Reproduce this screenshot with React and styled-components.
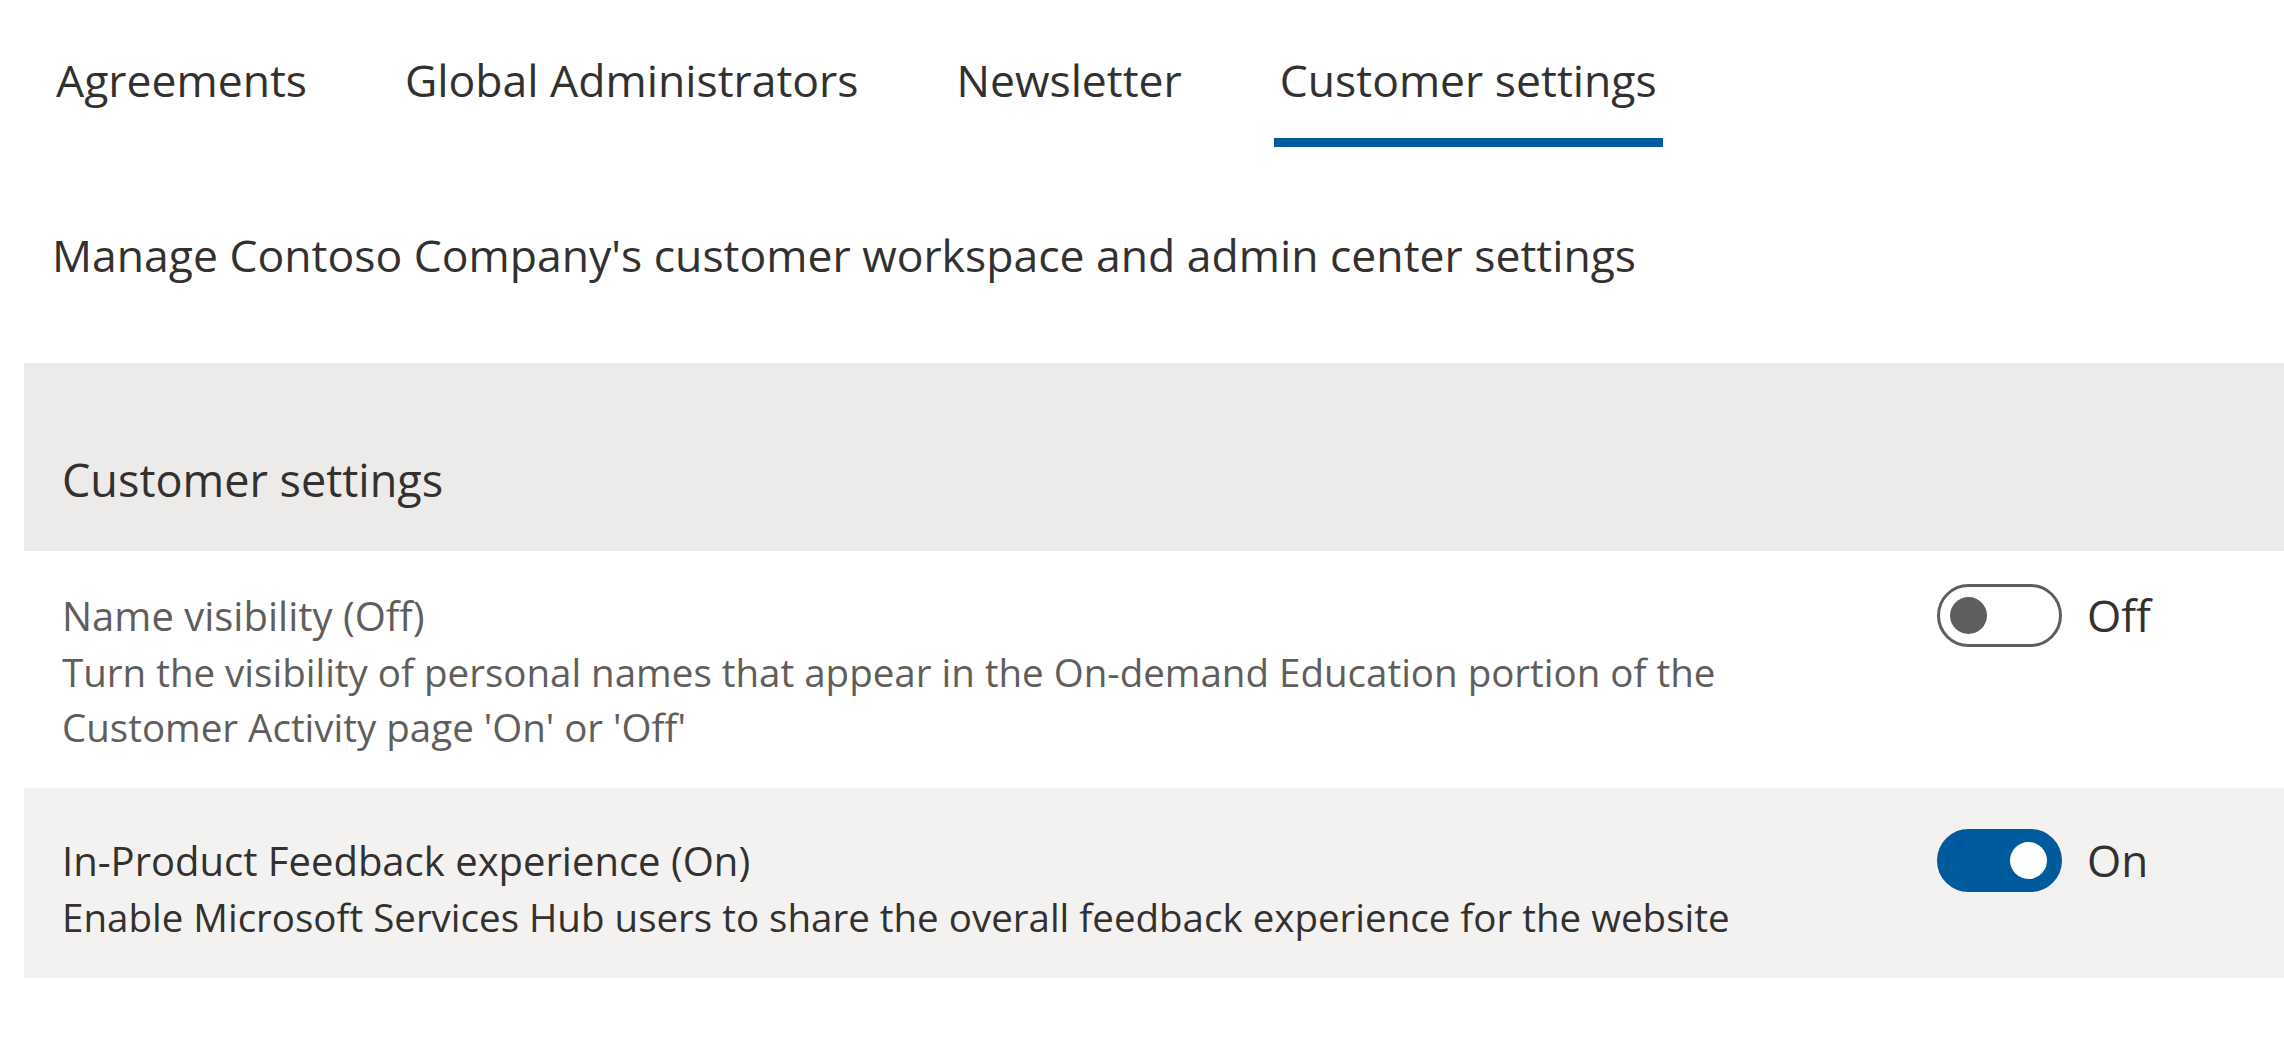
import React, { useState } from 'react'
import styled, { createGlobalStyle } from 'styled-components'

const GlobalStyle = createGlobalStyle`
  html, body {
    margin: 0;
    padding: 0;
    background: #ffffff;
  }
  body {
    font-family: "Open Sans", "Noto Sans", sans-serif;
    color: #323130;
  }
`

const Page = styled.div`
  padding: 47px 0 0 24px;
`

const TabBar = styled.div`
  display: flex;
  gap: 86px;
  padding-left: 26px;
`

const Tab = styled.div`
  display: flex;
  flex-direction: column;
  align-items: stretch;
  font-size: 44.5px;
  line-height: 66px;
  color: #323130;
  cursor: pointer;

  span {
    padding: 0 6px;
  }

  &::after {
    content: '';
    display: block;
    height: 9px;
    margin-top: 25px;
    background: ${props => (props.$active ? '#005a9e' : 'transparent')};
  }
`

const Intro = styled.p`
  margin: 75px 0 0 28px;
  font-size: 44.5px;
  line-height: 66px;
  color: #323130;
`

const Section = styled.section`
  margin-top: 75px;
`

const SectionHeader = styled.div`
  background: #edebe9;
  padding: 84px 0 38px 38px;
  font-size: 45px;
  line-height: 66px;
  color: #323130;
`

const Row = styled.div`
  display: grid;
  grid-template-columns: 1fr 347px;
  background: ${props => (props.$shaded ? '#f3f2f1' : '#ffffff')};
  padding: ${props => props.$pad} 0 33px 38px;
`

const Texts = styled.div`
  display: flex;
  flex-direction: column;
`

const Title = styled.div`
  font-size: 40px;
  line-height: 55px;
  color: ${props => (props.$muted ? '#605e5c' : '#323130')};
`

const Description = styled.div`
  margin-top: 2px;
  font-size: 38.5px;
  line-height: 55px;
  color: ${props => (props.$muted ? '#605e5c' : '#323130')};
  max-width: 1760px;
`

const ToggleArea = styled.div`
  display: flex;
  align-items: center;
  gap: 25px;
  height: 55px;
`

const Track = styled.button`
  box-sizing: border-box;
  display: flex;
  align-items: center;
  justify-content: ${props => (props.$on ? 'flex-end' : 'flex-start')};
  width: 125px;
  height: 63px;
  padding: 0 ${props => (props.$on ? '12px' : '10px')};
  border-radius: 32px;
  border: 3px solid ${props => (props.$on ? '#005a9e' : '#605e5c')};
  background: ${props => (props.$on ? '#005a9e' : '#ffffff')};
  cursor: pointer;
`

const Knob = styled.span`
  display: block;
  width: 37px;
  height: 37px;
  border-radius: 50%;
  background: ${props => (props.$on ? '#ffffff' : '#605e5c')};
`

const ToggleLabel = styled.span`
  font-size: 44px;
  line-height: 55px;
  color: #323130;
`

const Toggle = ({ on, onChange }) => (
  <ToggleArea>
    <Track $on={on} onClick={() => onChange(!on)} aria-pressed={on}>
      <Knob $on={on} />
    </Track>
    <ToggleLabel>{on ? 'On' : 'Off'}</ToggleLabel>
  </ToggleArea>
)

const tabs = ['Agreements', 'Global Administrators', 'Newsletter', 'Customer settings']

const App = () => {
  const [active, setActive] = useState('Customer settings')
  const [names, setNames] = useState(false)
  const [feedback, setFeedback] = useState(true)

  return (
    <>
      <GlobalStyle />
      <Page>
        <TabBar>
          {tabs.map(t => (
            <Tab key={t} $active={t === active} onClick={() => setActive(t)}>
              <span>{t}</span>
            </Tab>
          ))}
        </TabBar>

        <Intro>Manage Contoso Company's customer workspace and admin center settings</Intro>

        <Section>
          <SectionHeader>Customer settings</SectionHeader>

          <Row $pad="37px">
            <Texts>
              <Title $muted>Name visibility ({names ? 'On' : 'Off'})</Title>
              <Description $muted>
                Turn the visibility of personal names that appear in the On-demand Education portion of the
                <br />
                Customer Activity page 'On' or 'Off'
              </Description>
            </Texts>
            <Toggle on={names} onChange={setNames} />
          </Row>

          <Row $shaded $pad="45px">
            <Texts>
              <Title>In-Product Feedback experience ({feedback ? 'On' : 'Off'})</Title>
              <Description>
                Enable Microsoft Services Hub users to share the overall feedback experience for the website
              </Description>
            </Texts>
            <Toggle on={feedback} onChange={setFeedback} />
          </Row>
        </Section>
      </Page>
    </>
  )
}

export default App
